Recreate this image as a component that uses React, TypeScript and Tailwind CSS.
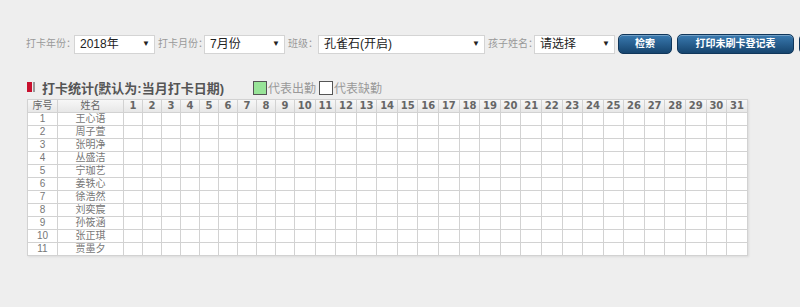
import React from 'react';

const students = ['王心语', '周子萱', '张明净', '丛盛洁', '宁珈艺', '姜轶心', '徐浩然', '刘奕宸', '孙筱涵', '张正琪', '贾墨夕'];
const days = Array.from({ length: 31 }, (_, i) => i + 1);

const Select: React.FC<{ value: string; width: string }> = ({ value, width }) => (
  <div className={`${width} shrink-0 h-[19px] bg-white border border-[#d4d4d4] flex items-center justify-between pl-[5px] pr-[4px]`}>
    <span className="text-[12px] text-[#222] leading-none">{value}</span>
    <span className="text-[8px] text-[#222] leading-none">▼</span>
  </div>
);

const Label: React.FC<{ text: string; width: string }> = ({ text, width }) => (
  <span className={`${width} shrink-0 pl-[3px] text-[10px] text-[#999] leading-none`}>{text}</span>
);

const Button: React.FC<{ text: string; width: string }> = ({ text, width }) => (
  <button className={`${width} shrink-0 h-[20px] rounded-[5px] border border-[#10365a] bg-gradient-to-b from-[#3a7ab0] to-[#16456f] text-white text-[10px] font-bold leading-none shadow-[inset_0_1px_0_rgba(255,255,255,0.3)]`}>
    {text}
  </button>
);

export default function App() {
  return (
    <div className="w-[800px] h-[307px] bg-[#eeeeee] overflow-hidden" style={{ fontFamily: '"Liberation Sans", "Noto Sans CJK SC", sans-serif' }}>
      {/* toolbar */}
      <div className="flex items-center pt-[34px] pl-[23px] whitespace-nowrap">
        <Label text="打卡年份：" width="w-[51px]" />
        <Select value="2018年" width="w-[81px]" />
        <Label text="打卡月份：" width="w-[49px]" />
        <Select value="7月份" width="w-[81px]" />
        <Label text="班级：" width="w-[33px]" />
        <Select value="孔雀石(开启)" width="w-[167px]" />
        <Label text="孩子姓名：" width="w-[49px]" />
        <Select value="请选择" width="w-[81px]" />
        <div className="flex gap-[5px] ml-[3px] shrink-0">
          <Button text="检索" width="w-[54px]" />
          <Button text="打印未刷卡登记表" width="w-[117px]" />
          <Button text="" width="w-[54px]" />
        </div>
      </div>

      {/* title */}
      <div className="flex items-end mt-[24px] ml-[27px] h-[17px] whitespace-nowrap">
        <div className="flex items-center h-[17px] gap-[1px] mr-[7px]">
          <div className="w-[5px] h-[10px] bg-[#c8102e]" />
          <div className="w-[2px] h-[10px] bg-[#999]" />
        </div>
        <span className="text-[13px] font-bold text-[#555] leading-none">打卡统计(默认为:当月打卡日期)</span>
        <div className="flex items-end ml-[29px] text-[12px] text-[#999] leading-none">
          <span className="w-[14px] h-[14px] bg-[#98e498] border border-[#555] mr-[1px]" />
          <span>代表出勤</span>
          <span className="w-[14px] h-[14px] bg-white border border-[#555] ml-[3px] mr-[1px]" />
          <span>代表缺勤</span>
        </div>
      </div>

      {/* table */}
      <table className="table-fixed border-collapse ml-[27px] mt-[4px] w-[721px] bg-white text-center shadow-[1px_1px_2px_rgba(0,0,0,0.08)]">
        <colgroup>
          <col className="w-[30px]" />
          <col className="w-[66px]" />
          {days.map((d) => (
            <col key={d} className={d < 10 ? 'w-[19px]' : ''} />
          ))}
        </colgroup>
        <thead>
          <tr className="h-[13px] bg-gradient-to-b from-[#f7f7f7] to-[#e6e6e6]">
            <th className="border border-[#d2d2d2] text-[10px] font-normal text-[#666] leading-none p-0">序号</th>
            <th className="border border-[#d2d2d2] text-[10px] font-normal text-[#666] leading-none p-0">姓名</th>
            {days.map((d) => (
              <th key={d} className="border border-[#d2d2d2] text-[10px] font-bold text-[#666] leading-none p-0" style={{ fontFamily: '"DejaVu Sans", sans-serif' }}>
                {d}
              </th>
            ))}
          </tr>
        </thead>
        <tbody>
          {students.map((name, i) => (
            <tr key={name} className="h-[13px]">
              <td className="border border-[#d2d2d2] text-[10px] text-[#777] leading-none p-0">{i + 1}</td>
              <td className="border border-[#d2d2d2] text-[10px] text-[#777] leading-none p-0">{name}</td>
              {days.map((d) => (
                <td key={d} className="border border-[#d2d2d2] p-0" />
              ))}
            </tr>
          ))}
        </tbody>
      </table>
    </div>
  );
}
